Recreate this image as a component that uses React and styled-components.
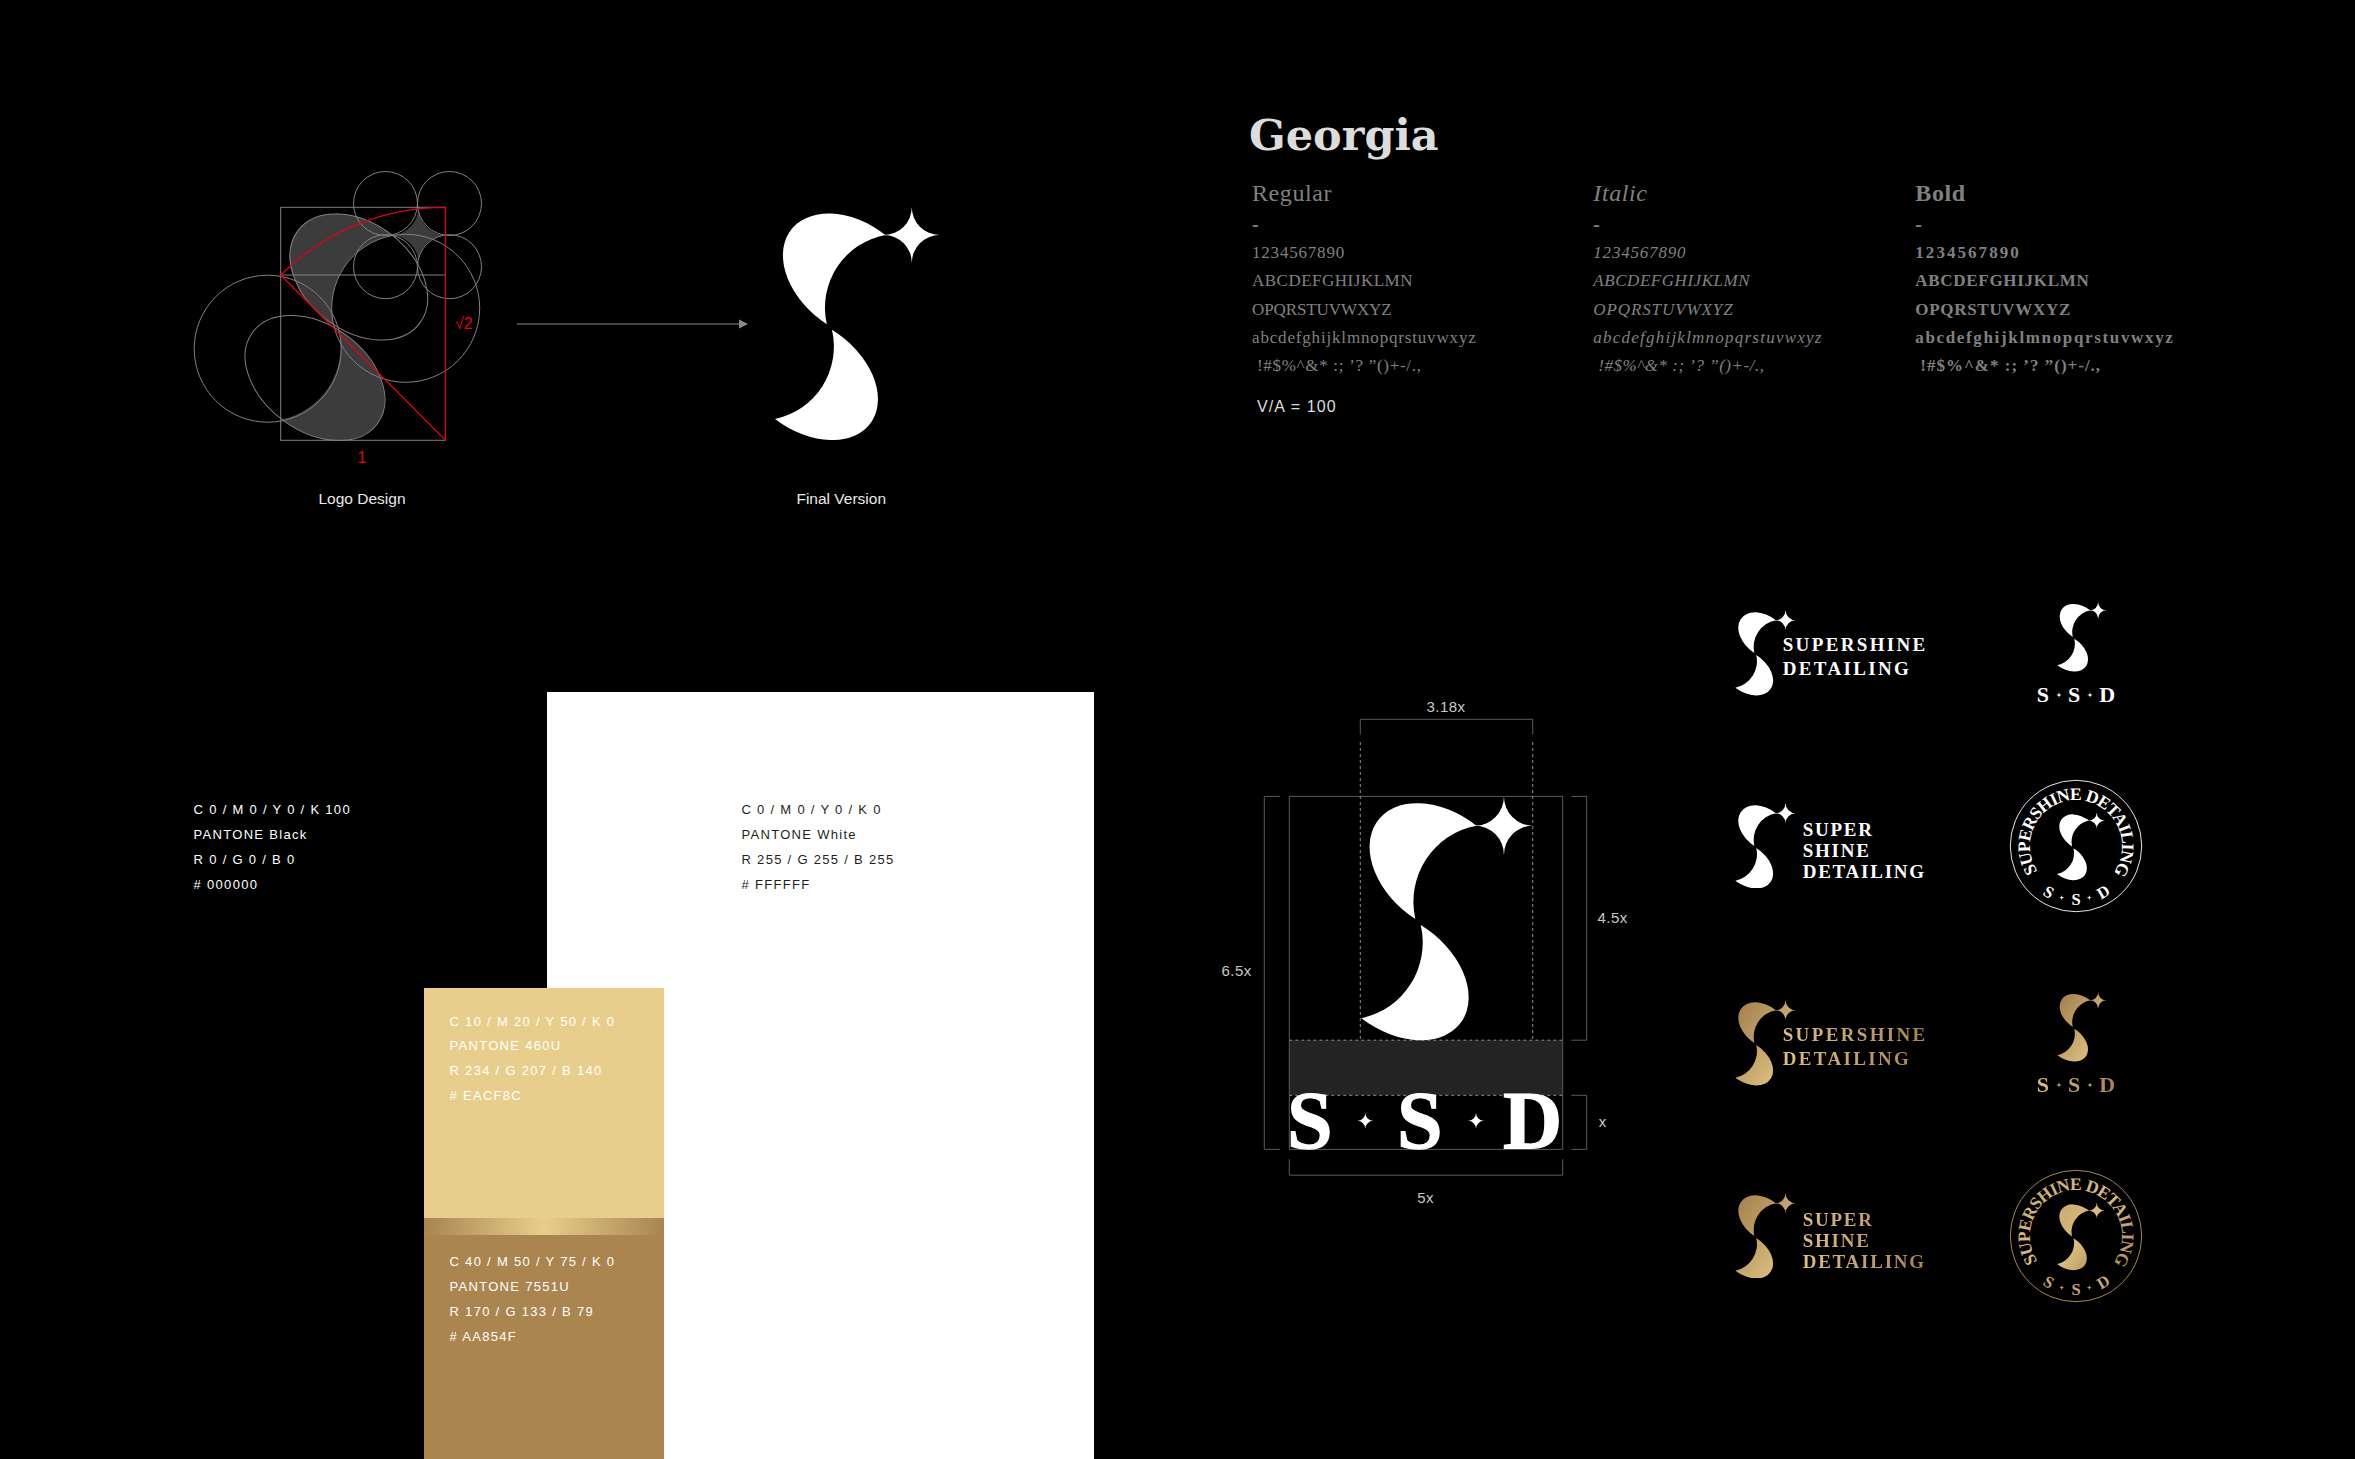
import React, { useId } from 'react'
import styled, { createGlobalStyle, css } from 'styled-components'

const LOGO_S =
  'M111.38 27.96A76.5 53.4 37.6 1 0 52.8 117.13A74 74 0 0 1 111.38 27.96ZM57.97 122.82A77.3 53 36 1 1 1 212A74 74 0 0 0 57.97 122.82Z'
const LOGO_STAR =
  'M137.8 0A27.6 28 0 0 0 165.4 28A27.6 28 0 0 0 137.8 56A27.6 28 0 0 0 110.2 28A27.6 28 0 0 0 137.8 0Z'
const LOGO_PATH = LOGO_S + LOGO_STAR
const STAR_PATH = 'M0 -8A8 8 0 0 0 8 0A8 8 0 0 0 0 8A8 8 0 0 0 -8 0A8 8 0 0 0 0 -8Z'

const SWATCH_BLACK = ['C 0 / M 0 / Y 0 / K 100', 'PANTONE Black', 'R 0 / G 0 / B 0', '# 000000']
const SWATCH_WHITE = ['C 0 / M 0 / Y 0 / K 0', 'PANTONE White', 'R 255 / G 255 / B 255', '# FFFFFF']
const SWATCH_LIGHT = ['C 10 / M 20 / Y 50 / K 0', 'PANTONE 460U', 'R 234 / G 207 / B 140', '# EACF8C']
const SWATCH_BROWN = ['C 40 / M 50 / Y 75 / K 0', 'PANTONE 7551U', 'R 170 / G 133 / B 79', '# AA854F']

// letter spacing per row: digits, upper 1, upper 2, lower, symbols
const FACES = [
  { name: 'Regular', width: 341.3, spacing: [0.8, 0.5, -0.1, 0.83, 0.7] },
  { name: 'Italic', width: 322, italic: true, spacing: [0.8, 0.55, 0.9, 1.23, 0.5] },
  { name: 'Bold', width: 322, bold: true, spacing: [2.05, 0.7, 0.7, 1.65, 1] },
]

const GlobalStyle = createGlobalStyle`
  html, body {
    margin: 0;
    background: #000;
  }
`

function Swatch({ lines }) {
  return lines.map((line) => <SwatchLine key={line}>{line}</SwatchLine>)
}

function LogoDesign() {
  return (
    <DesignSvg viewBox="190 170 300 300">
      <path d={LOGO_PATH} fill="#3c3c3c" transform="translate(280.7 207.3)" />
      <g fill="none" stroke="#808080" strokeWidth="1">
        <circle cx="385.5" cy="203.5" r="32" />
        <circle cx="449.5" cy="203.5" r="32" />
        <circle cx="385.5" cy="266.7" r="32" />
        <circle cx="449.5" cy="266.7" r="32" />
        <circle cx="267.7" cy="348.7" r="73.5" />
        <circle cx="405.7" cy="308.3" r="74" />
        <ellipse cx="358.8" cy="277" rx="76.5" ry="53.4" transform="rotate(37.6 358.8 277)" />
        <ellipse cx="315" cy="378" rx="77.3" ry="53" transform="rotate(36 315 378)" />
        <rect x="280.7" y="207.3" width="164.8" height="233" />
        <path d="M280.7 275H445.5" />
      </g>
      <g fill="none" stroke="#e0001b" strokeWidth="1.3">
        <path d="M445.5 207.3V440.3L280.7 275A233 233 0 0 1 445.5 207.3" />
      </g>
      <RedText x="455" y="329">√2</RedText>
      <RedText x="357.5" y="463">1</RedText>
    </DesignSvg>
  )
}

function Specimen({ name, width, italic, bold, spacing }) {
  return (
    <Face $width={width} $italic={italic} $bold={bold}>
      <FaceName>{name}</FaceName>
      <FaceDash>-</FaceDash>
      <Glyphs $spacing={spacing[0]}>1234567890</Glyphs>
      <Glyphs $spacing={spacing[1]}>ABCDEFGHIJKLMN</Glyphs>
      <Glyphs $spacing={spacing[2]}>OPQRSTUVWXYZ</Glyphs>
      <Glyphs $spacing={spacing[3]}>abcdefghijklmnopqrstuvwxyz</Glyphs>
      <Glyphs $spacing={spacing[4]} $inset>!#$%^&amp;* :; ’? ”()+-/.,</Glyphs>
    </Face>
  )
}

function Construction() {
  return (
    <ConstructionSvg viewBox="1200 690 430 520">
      <rect x="1289.3" y="1040.2" width="273.4" height="55.1" fill="#232324" />
      <g fill="none" stroke="#5a5a5a" strokeWidth="1">
        <path d="M1289.3 1149.4V796.4H1562.7V1149.4H1289.3" />
        <path d="M1360.3 734.4V719.3H1532.7V734.4" />
        <path d="M1280 796.4H1264.3V1149.4H1280" />
        <path d="M1571.3 796.4H1586.7V1040.2H1571.3" />
        <path d="M1571.3 1095.3H1586.7V1149.4H1571.3" />
        <path d="M1289.3 1159.3V1175.2H1562.7V1159.3" />
      </g>
      <g fill="none" stroke="#8a8a8a" strokeWidth="1" strokeDasharray="3 3">
        <path d="M1360.3 742V1040.2M1532.7 742V1040.2" />
        <path d="M1289.3 1040.2H1562.7M1289.3 1095.3H1562.7" />
      </g>
      <path d={LOGO_PATH} fill="#fff" transform="translate(1360.3 796.4) scale(1.0424 1.0464)" />
      <BigLetter x="1287" y="1148">S</BigLetter>
      <BigLetter x="1397" y="1148">S</BigLetter>
      <BigLetter x="1503" y="1148">D</BigLetter>
      <path d={STAR_PATH} fill="#fff" transform="translate(1365.3 1120.8)" />
      <path d={STAR_PATH} fill="#fff" transform="translate(1476 1120.8)" />
      <DimText x="1446" y="712" textAnchor="middle">3.18x</DimText>
      <DimText x="1236.7" y="976" textAnchor="middle">6.5x</DimText>
      <DimText x="1612.7" y="923" textAnchor="middle">4.5x</DimText>
      <DimText x="1602.7" y="1127" textAnchor="middle">x</DimText>
      <DimText x="1425.7" y="1203" textAnchor="middle">5x</DimText>
    </ConstructionSvg>
  )
}

function Logo({ width, gold }) {
  return (
    <LogoSvg viewBox="0 0 165.5 233" $width={width}>
      <path d={LOGO_PATH} fill={gold ? 'url(#goldLogo)' : '#fff'} />
    </LogoSvg>
  )
}

function Star({ gold }) {
  return (
    <StarSvg viewBox="-8 -8 16 16">
      <path d={STAR_PATH} fill={gold ? '#c6a86a' : '#fff'} />
    </StarSvg>
  )
}

function Mark({ gold }) {
  return (
    <MarkBox>
      <Logo width={49.4} gold={gold} />
      <Initials $gold={gold}>
        <span>S</span>
        <Star gold={gold} />
        <span>S</span>
        <Star gold={gold} />
        <span>D</span>
      </Initials>
    </MarkBox>
  )
}

function Seal({ gold }) {
  const id = useId()
  const solid = gold ? '#c6a86a' : '#fff'
  const lowRef = '#' + id + 'low'
  return (
    <SealSvg viewBox="-68 -68 136 136">
      <circle r="65.7" fill="none" stroke={gold ? '#b4935b' : '#fff'} strokeWidth="0.9" />
      <path id={id + 'top'} d="M-38.4 25.3A46 46 0 1 1 37.8 26.2" fill="none" />
      <path id={id + 'low'} d="M-41.7 41.7A59 59 0 0 0 41.7 41.7" fill="none" />
      <SealText fill={gold ? 'url(#goldSeal)' : '#fff'} textLength="200" lengthAdjust="spacing">
        <textPath href={'#' + id + 'top'}>SUPERSHINE DETAILING</textPath>
      </SealText>
      <SealInitials fill={solid} textAnchor="middle">
        <textPath href={lowRef} startOffset="16%">S</textPath>
      </SealInitials>
      <SealInitials fill={solid} textAnchor="middle">
        <textPath href={lowRef} startOffset="50%">S</textPath>
      </SealInitials>
      <SealInitials fill={solid} textAnchor="middle">
        <textPath href={lowRef} startOffset="84%">D</textPath>
      </SealInitials>
      <path d={STAR_PATH} fill={solid} transform="translate(-14.3 51.7) scale(.3)" />
      <path d={STAR_PATH} fill={solid} transform="translate(13.3 51.7) scale(.3)" />
      <path d={LOGO_PATH} fill={gold ? 'url(#goldSeal)' : '#fff'} transform="translate(-19.3 -33.5) scale(.2905)" />
    </SealSvg>
  )
}

function LogoRow({ gold, stacked }) {
  return (
    <>
      <Lockup>
        <Logo width={60.7} gold={gold} />
        <WordMark $gold={gold} $stacked={stacked}>
          {stacked ? (
            <>
              <div>SUPER</div>
              <div>SHINE</div>
              <div>DETAILING</div>
            </>
          ) : (
            <>
              <div>SUPERSHINE</div>
              <div>DETAILING</div>
            </>
          )}
        </WordMark>
      </Lockup>
      {stacked ? <Seal gold={gold} /> : <Mark gold={gold} />}
    </>
  )
}

export default function App() {
  return (
    <Page>
      <GlobalStyle />
      <HiddenDefs>
        <defs>
          <linearGradient id="goldLogo" x1="0" y1="0" x2="1" y2="1">
            <stop offset="0" stopColor="#a07c49" />
            <stop offset="1" stopColor="#eacf8c" />
          </linearGradient>
          <linearGradient id="goldSeal" x1="0" y1="0" x2="1" y2="1">
            <stop offset="0" stopColor="#c6a96c" />
            <stop offset="0.5" stopColor="#d9bd7d" />
            <stop offset="1" stopColor="#ab8852" />
          </linearGradient>
        </defs>
      </HiddenDefs>

      <Top>
        <Figures>
          <Figure $top={0} $captionTop={19} $captionLeft={44}>
            <LogoDesign />
            <Caption>Logo Design</Caption>
          </Figure>
          <ArrowSvg viewBox="0 0 231 10">
            <path d="M0 5H222" stroke="#8a8a8a" strokeWidth="1.2" />
            <path d="M222 .5L231 5L222 9.5Z" fill="#8a8a8a" />
          </ArrowSvg>
          <Figure $top={37.3} $captionTop={48.7} $captionRight={31}>
            <Logo width={165.5} />
            <Caption>Final Version</Caption>
          </Figure>
        </Figures>

        <TypePanel>
          <TypeTitle>Georgia</TypeTitle>
          <FaceRow>
            {FACES.map((face) => (
              <Specimen key={face.name} {...face} />
            ))}
          </FaceRow>
          <Tracking>V/A = 100</Tracking>
        </TypePanel>
      </Top>

      <Bottom>
        <Swatches>
          <BlackInfo>
            <Swatch lines={SWATCH_BLACK} />
          </BlackInfo>
          <WhitePanel>
            <Swatch lines={SWATCH_WHITE} />
            <GoldStack>
              <LightGold>
                <Swatch lines={SWATCH_LIGHT} />
              </LightGold>
              <GoldBlend />
              <BrownGold>
                <Swatch lines={SWATCH_BROWN} />
              </BrownGold>
            </GoldStack>
          </WhitePanel>
        </Swatches>

        <Construction />

        <Logos>
          <LogoSet>
            <LogoRow />
            <LogoRow stacked />
          </LogoSet>
          <LogoSet $gap>
            <LogoRow gold />
            <LogoRow gold stacked />
          </LogoSet>
        </Logos>
      </Bottom>
    </Page>
  )
}

const serif = `"Liberation Serif", "Times New Roman", serif`
const sans = `"Liberation Sans", Arial, sans-serif`

const goldText = css`
  background: linear-gradient(90deg, #dcc07f, #a6834f);
  -webkit-background-clip: text;
  background-clip: text;
  color: transparent;
`

const Page = styled.div`
  width: 2355px;
  height: 1459px;
  overflow: hidden;
  background: #000;
  display: flex;
  flex-direction: column;
  font-family: ${sans};
`

const HiddenDefs = styled.svg`
  position: absolute;
  width: 0;
  height: 0;
`

const Top = styled.div`
  height: 556px;
  flex: none;
  display: flex;
`

const Figures = styled.div`
  width: 1249px;
  box-sizing: border-box;
  padding: 170px 0 0 190px;
  display: flex;
  align-items: flex-start;
`

const Figure = styled.div`
  display: flex;
  flex-direction: column;
  padding-top: ${(p) => p.$top}px;

  > div {
    margin-top: ${(p) => p.$captionTop}px;
    padding-left: ${(p) => p.$captionLeft || 0}px;
    padding-right: ${(p) => p.$captionRight || 0}px;
  }
`

const DesignSvg = styled.svg`
  display: block;
  width: 300px;
  height: 300px;
`

const RedText = styled.text`
  font-family: ${sans};
  font-size: 16px;
  fill: #e0001b;
`

const Caption = styled.div`
  font-size: 15.5px;
  line-height: 20px;
  color: #e8e8e8;
  text-align: center;
  white-space: nowrap;
`

const ArrowSvg = styled.svg`
  flex: none;
  width: 231px;
  height: 10px;
  margin: 148.7px 26px 0 27px;
`

const TypePanel = styled.div`
  padding-top: 107px;
`

const TypeTitle = styled.div`
  font-family: "DejaVu Serif", ${serif};
  font-weight: 700;
  font-size: 43px;
  line-height: 56px;
  color: #dcdcdc;
`

const FaceRow = styled.div`
  display: flex;
  margin-top: 14.6px;
  padding-left: 3px;
`

const Face = styled.div`
  width: ${(p) => p.$width}px;
  font-family: ${serif};
  color: #808080;
  font-style: ${(p) => (p.$italic ? 'italic' : 'normal')};
  font-weight: ${(p) => (p.$bold ? 700 : 400)};
`

const FaceName = styled.div`
  font-size: 24px;
  line-height: 30px;
  letter-spacing: 0.6px;
`

const FaceDash = styled.div`
  font-size: 20px;
  font-weight: 700;
  line-height: 20px;
  margin: 6px 0 5.2px;
`

const Glyphs = styled.div`
  font-size: 17px;
  line-height: 28.4px;
  white-space: nowrap;
  letter-spacing: ${(p) => p.$spacing}px;
  padding-left: ${(p) => (p.$inset ? 5 : 0)}px;
`

const Tracking = styled.div`
  margin: 16.5px 0 0 8px;
  font-size: 16px;
  line-height: 20px;
  letter-spacing: 1.1px;
  color: #dddddd;
`

const Bottom = styled.div`
  flex: 1;
  display: flex;
  min-height: 0;
`

const Swatches = styled.div`
  display: flex;
  width: 1094px;
  flex: none;
`

const BlackInfo = styled.div`
  width: 547px;
  box-sizing: border-box;
  padding: 242.4px 0 0 193.6px;
  color: #fff;
`

const WhitePanel = styled.div`
  position: relative;
  width: 547px;
  margin-top: 136px;
  box-sizing: border-box;
  padding: 106.4px 0 0 194.5px;
  background: #fff;
  color: #231f20;
`

const SwatchLine = styled.div`
  font-size: 13px;
  line-height: 24.8px;
  letter-spacing: 1.3px;
  white-space: nowrap;
`

const GoldStack = styled.div`
  position: absolute;
  left: -123px;
  top: 295.5px;
  bottom: 0;
  width: 239.6px;
  display: flex;
  flex-direction: column;
  color: #fff;
`

const LightGold = styled.div`
  height: 230.5px;
  box-sizing: border-box;
  padding: 22.2px 0 0 25.5px;
  background: #e8ce8c;
`

const GoldBlend = styled.div`
  height: 17.4px;
  background: linear-gradient(90deg, #a98450, #e8ce8c 50%, #a98450);
`

const BrownGold = styled.div`
  flex: 1;
  padding: 15px 0 0 25.5px;
  background: #aa854f;
`

const ConstructionSvg = styled.svg`
  flex: none;
  width: 430px;
  height: 520px;
  margin: 134px 0 0 106px;
`

const BigLetter = styled.text`
  font-family: ${serif};
  font-weight: 700;
  font-size: 82px;
  fill: #fff;
  stroke: #fff;
  stroke-width: 1.2px;
`

const DimText = styled.text`
  font-family: ${sans};
  font-size: 15px;
  letter-spacing: 0.5px;
  fill: #c8c8c8;
`

const Logos = styled.div`
  flex: 1;
  padding: 0.7px 0 0 105px;
`

const LogoSet = styled.div`
  display: grid;
  grid-template-columns: 241px 200px;
  grid-auto-rows: 192.6px;
  align-items: center;
  justify-items: start;
  margin-top: ${(p) => (p.$gap ? 4.8 : 0)}px;

  > :nth-child(2n) {
    justify-self: center;
  }
`

const LogoSvg = styled.svg`
  display: block;
  flex: none;
  width: ${(p) => p.$width}px;
`

const Lockup = styled.div`
  display: flex;
  align-items: center;
`

const WordMark = styled.div`
  font-family: ${serif};
  font-weight: 700;
  font-size: 19px;
  white-space: nowrap;
  color: #fff;
  letter-spacing: ${(p) => (p.$stacked ? 1.75 : 2.35)}px;
  line-height: ${(p) => (p.$stacked ? 21 : 24.4)}px;
  margin-left: ${(p) => (p.$stacked ? 7 : -13)}px;
  margin-top: ${(p) => (p.$stacked ? 10 : 8)}px;
  ${(p) => p.$gold && goldText}
`

const MarkBox = styled.div`
  display: flex;
  flex-direction: column;
  align-items: center;
  padding-top: 2px;

  > svg {
    margin-left: 12px;
  }
`

const Initials = styled.div`
  display: flex;
  align-items: center;
  gap: 6.5px;
  margin-top: 12px;
  font-family: ${serif};
  font-weight: 700;
  font-size: 22px;
  line-height: 22px;
  color: #fff;
  ${(p) => p.$gold && goldText}
`

const StarSvg = styled.svg`
  width: 6px;
  height: 6px;
`

const SealSvg = styled.svg`
  display: block;
  width: 136px;
  height: 136px;
`

const SealText = styled.text`
  font-family: ${serif};
  font-weight: 700;
  font-size: 17.5px;
`

const SealInitials = styled.text`
  font-family: ${serif};
  font-weight: 700;
  font-size: 16.5px;
`
